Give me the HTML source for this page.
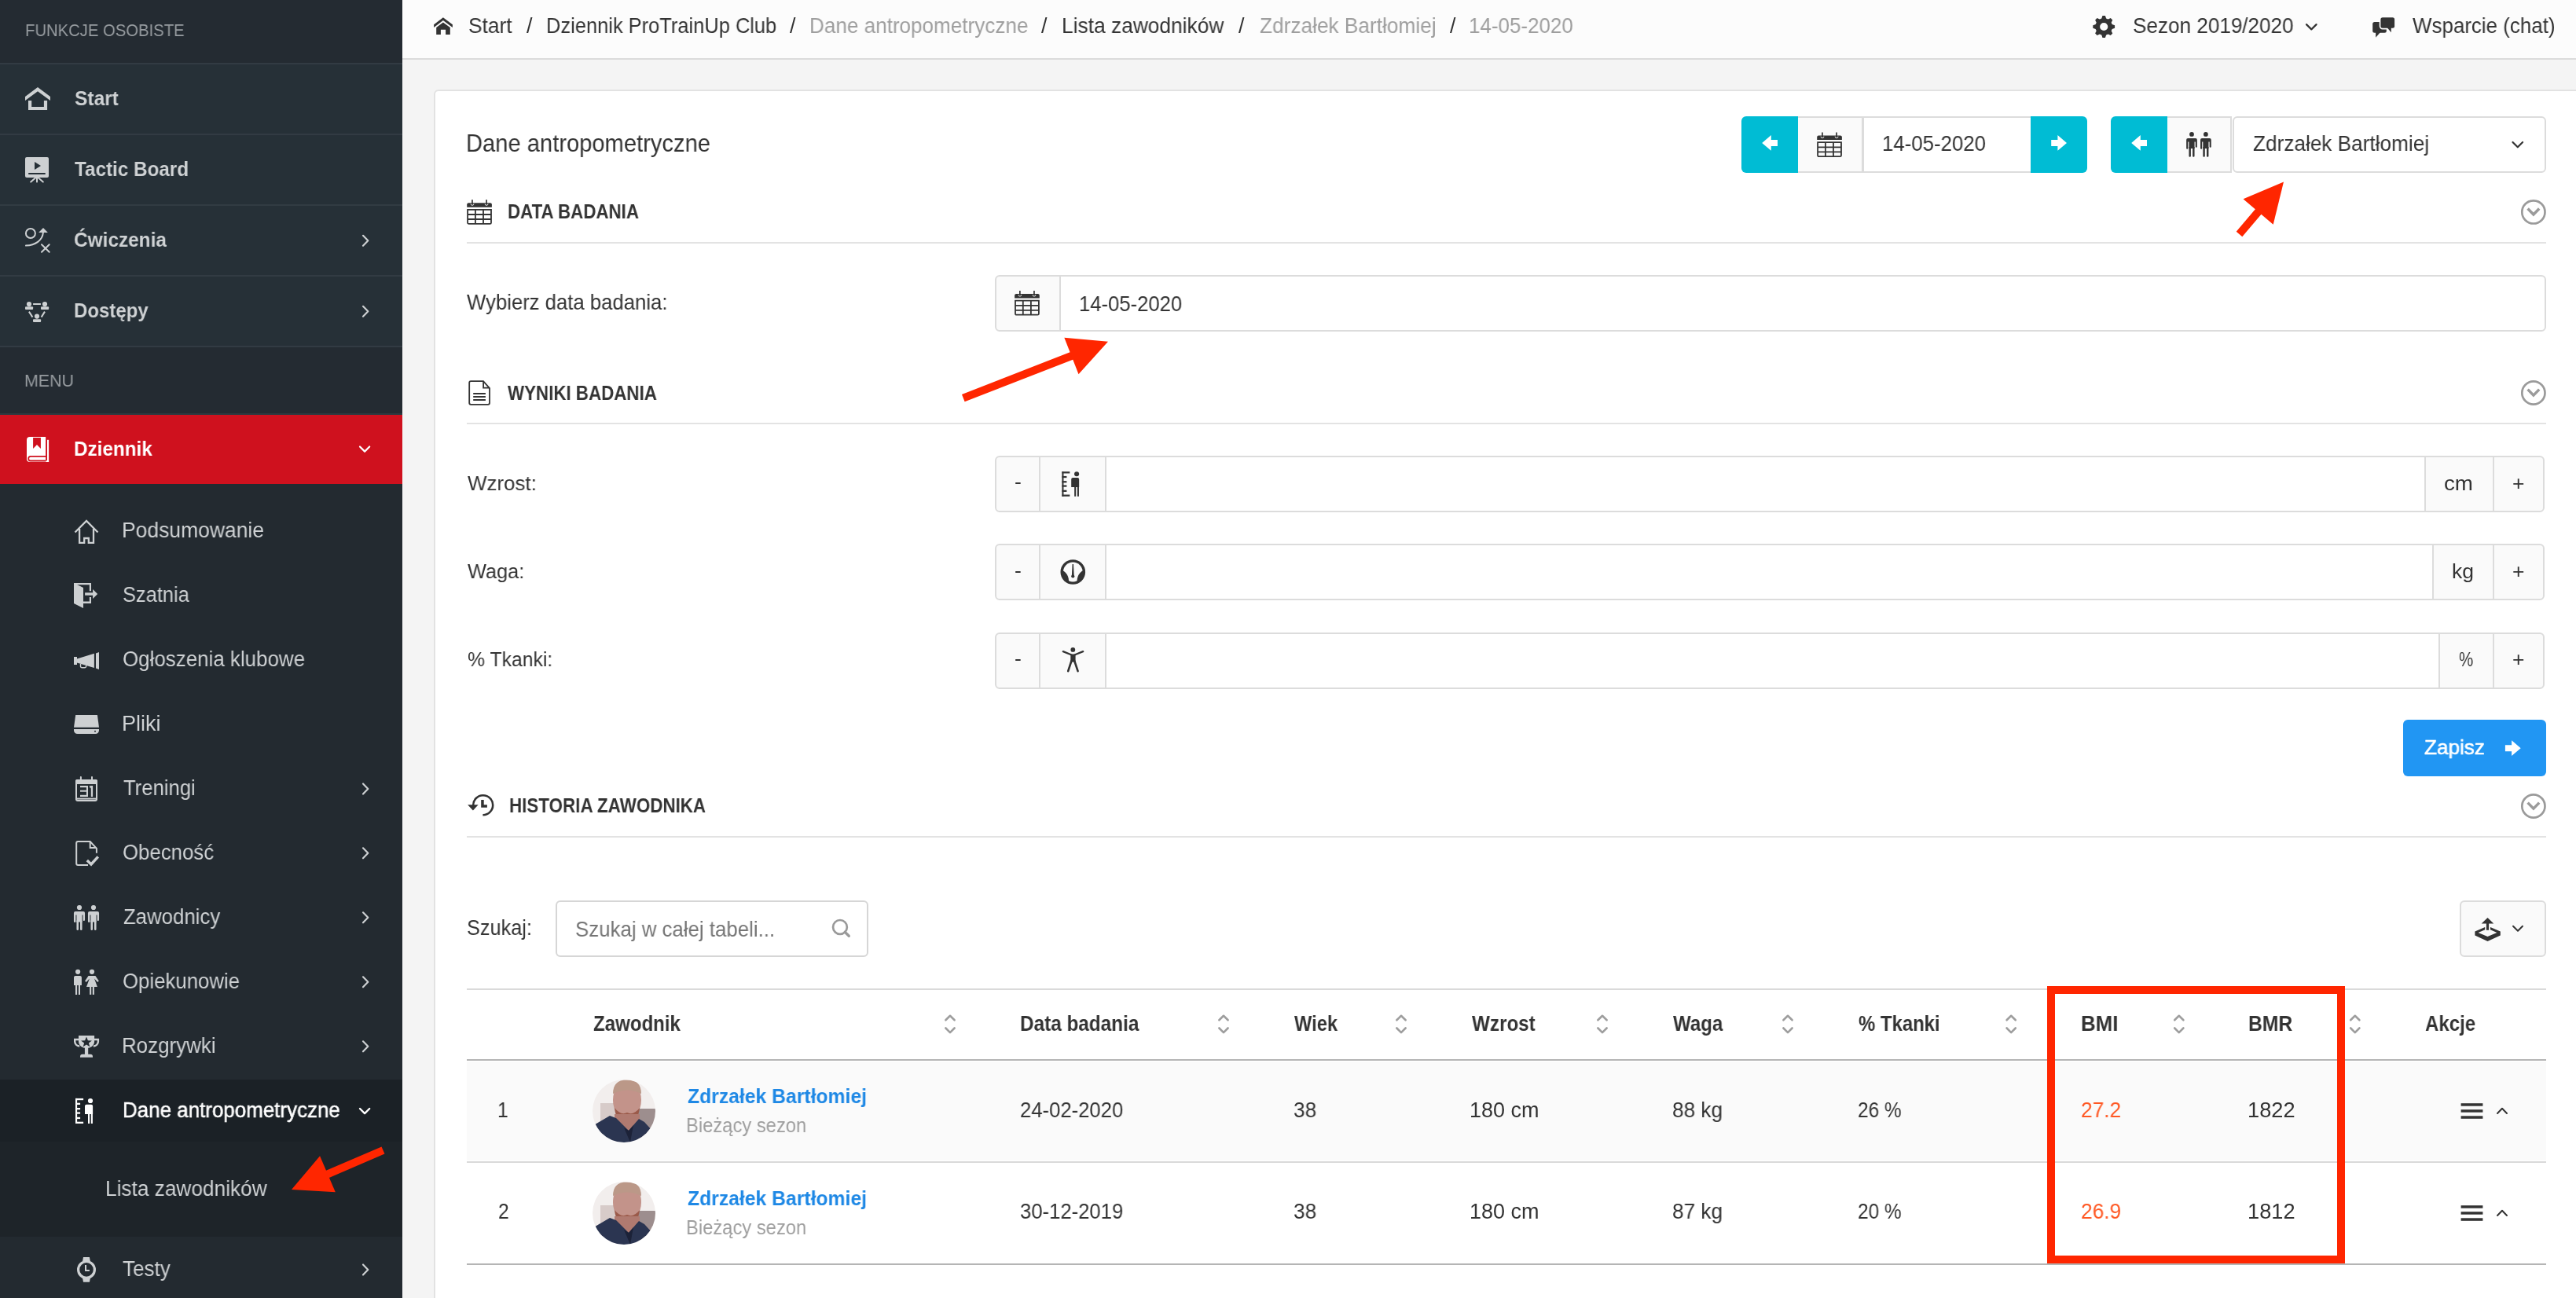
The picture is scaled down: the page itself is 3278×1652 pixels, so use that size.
<!DOCTYPE html>
<html><head><meta charset="utf-8"><style>
html,body{margin:0;padding:0;}
body{width:3278px;height:1652px;overflow:hidden;position:relative;background:#f4f4f4;font-family:"Liberation Sans",sans-serif;}
.a{position:absolute;box-sizing:border-box;}
.t{position:absolute;white-space:nowrap;transform-origin:0 0;will-change:transform;font-family:"Liberation Sans",sans-serif;}
</style></head><body>
<div class="a" style="left:0px;top:0px;width:512px;height:1652px;background:#232a30;"></div>
<div class="a" style="left:0px;top:0px;width:512px;height:80px;background:#242b32;"></div>
<div class="a" style="left:0px;top:80px;width:512px;height:360px;background:#263037;"></div>
<div class="a" style="left:0px;top:80px;width:512px;height:2px;background:#323b43;"></div>
<div class="a" style="left:0px;top:170px;width:512px;height:2px;background:#323b43;"></div>
<div class="a" style="left:0px;top:260px;width:512px;height:2px;background:#323b43;"></div>
<div class="a" style="left:0px;top:350px;width:512px;height:2px;background:#323b43;"></div>
<div class="a" style="left:0px;top:440px;width:512px;height:2px;background:#323b43;"></div>
<div class="a" style="left:0px;top:442px;width:512px;height:86px;background:#242b32;"></div>
<div class="a" style="left:0px;top:526px;width:512px;height:2px;background:#2d3940;"></div>
<div class="a" style="left:0px;top:528px;width:512px;height:88px;background:#cf111e;"></div>
<div class="a" style="left:0px;top:1374px;width:512px;height:79px;background:#1b2126;"></div>
<div class="a" style="left:0px;top:1453px;width:512px;height:121px;background:#1e2429;"></div>
<div class="a" style="left:512px;top:0px;width:2766px;height:74px;background:#fcfcfc;"></div>
<div class="a" style="left:512px;top:74px;width:2766px;height:2px;background:#dcdcdc;"></div>
<div class="a" style="left:552px;top:114px;width:2738px;height:1586px;background:#ffffff;border:2px solid #e2e2e2;border-radius:6px;"></div>
<div class="a" style="left:2216px;top:148px;width:72px;height:72px;background:#00bcd4;border-radius:6px 0 0 6px;"></div>
<div class="a" style="left:2288px;top:148px;width:84px;height:72px;background:#fafafa;border-top:2px solid #dcdcdc;border-bottom:2px solid #dcdcdc;border-right:3px solid #dcdcdc;"></div>
<div class="a" style="left:2372px;top:148px;width:212px;height:72px;background:#ffffff;border-top:2px solid #dcdcdc;border-bottom:2px solid #dcdcdc;"></div>
<div class="a" style="left:2584px;top:148px;width:72px;height:72px;background:#00bcd4;border-radius:0 6px 6px 0;"></div>
<div class="a" style="left:2686px;top:148px;width:72px;height:72px;background:#00bcd4;border-radius:6px 0 0 6px;"></div>
<div class="a" style="left:2758px;top:148px;width:82px;height:72px;background:#fafafa;border-top:2px solid #dcdcdc;border-bottom:2px solid #dcdcdc;border-right:2px solid #dcdcdc;"></div>
<div class="a" style="left:2841px;top:148px;width:399px;height:72px;background:#ffffff;border:2px solid #dcdcdc;border-radius:6px;"></div>
<div class="a" style="left:594px;top:308px;width:2646px;height:2px;background:#e3e3e3;"></div>
<div class="a" style="left:594px;top:538px;width:2646px;height:2px;background:#e3e3e3;"></div>
<div class="a" style="left:594px;top:1064px;width:2646px;height:2px;background:#e3e3e3;"></div>
<div class="a" style="left:1266px;top:350px;width:84px;height:72px;background:#fafafa;border:2px solid #dcdcdc;border-radius:6px 0 0 6px;"></div>
<div class="a" style="left:1348px;top:350px;width:1892px;height:72px;background:#ffffff;border:2px solid #dcdcdc;border-radius:0 6px 6px 0;"></div>
<div class="a" style="left:1266px;top:580px;width:60px;height:72px;background:#fafafa;border:2px solid #dcdcdc;border-radius:6px 0 0 6px;"></div>
<div class="a" style="left:1322px;top:580px;width:86px;height:72px;background:#fafafa;border:2px solid #dcdcdc;"></div>
<div class="a" style="left:1408px;top:580px;width:1677px;height:72px;background:#ffffff;border-top:2px solid #dcdcdc;border-bottom:2px solid #dcdcdc;"></div>
<div class="a" style="left:3085px;top:580px;width:89px;height:72px;background:#fafafa;border:2px solid #dcdcdc;"></div>
<div class="a" style="left:3172px;top:580px;width:66px;height:72px;background:#fafafa;border:2px solid #dcdcdc;border-radius:0 6px 6px 0;"></div>
<div class="a" style="left:1266px;top:692px;width:60px;height:72px;background:#fafafa;border:2px solid #dcdcdc;border-radius:6px 0 0 6px;"></div>
<div class="a" style="left:1322px;top:692px;width:86px;height:72px;background:#fafafa;border:2px solid #dcdcdc;"></div>
<div class="a" style="left:1408px;top:692px;width:1687px;height:72px;background:#ffffff;border-top:2px solid #dcdcdc;border-bottom:2px solid #dcdcdc;"></div>
<div class="a" style="left:3095px;top:692px;width:79px;height:72px;background:#fafafa;border:2px solid #dcdcdc;"></div>
<div class="a" style="left:3172px;top:692px;width:66px;height:72px;background:#fafafa;border:2px solid #dcdcdc;border-radius:0 6px 6px 0;"></div>
<div class="a" style="left:1266px;top:805px;width:60px;height:72px;background:#fafafa;border:2px solid #dcdcdc;border-radius:6px 0 0 6px;"></div>
<div class="a" style="left:1322px;top:805px;width:86px;height:72px;background:#fafafa;border:2px solid #dcdcdc;"></div>
<div class="a" style="left:1408px;top:805px;width:1695px;height:72px;background:#ffffff;border-top:2px solid #dcdcdc;border-bottom:2px solid #dcdcdc;"></div>
<div class="a" style="left:3103px;top:805px;width:71px;height:72px;background:#fafafa;border:2px solid #dcdcdc;"></div>
<div class="a" style="left:3172px;top:805px;width:66px;height:72px;background:#fafafa;border:2px solid #dcdcdc;border-radius:0 6px 6px 0;"></div>
<div class="a" style="left:3058px;top:916px;width:182px;height:72px;background:#2196f3;border-radius:6px;"></div>
<div class="a" style="left:707px;top:1146px;width:398px;height:72px;background:#ffffff;border:2px solid #d6d6d6;border-radius:6px;"></div>
<div class="a" style="left:3130px;top:1146px;width:110px;height:72px;background:#fafafa;border:2px solid #dcdcdc;border-radius:6px;"></div>
<div class="a" style="left:594px;top:1258px;width:2646px;height:2px;background:#dadada;"></div>
<div class="a" style="left:594px;top:1348px;width:2646px;height:2px;background:#b5b5b5;"></div>
<div class="a" style="left:594px;top:1351px;width:2646px;height:126px;background:#fafafa;"></div>
<div class="a" style="left:594px;top:1478px;width:2646px;height:2px;background:#d9d9d9;"></div>
<div class="a" style="left:594px;top:1608px;width:2646px;height:2px;background:#b5b5b5;"></div>
<div class="t" style="left:31.59px;top:28px;font-size:22.32px;line-height:22.32px;color:#989da1;transform:scaleX(0.9079);">FUNKCJE OSOBISTE</div>
<div class="t" style="left:94.50px;top:112px;font-size:26.67px;line-height:26.67px;color:#cfd2d4;font-weight:bold;transform:scaleX(0.9202);">Start</div>
<div class="t" style="left:94.50px;top:202px;font-size:26.67px;line-height:26.67px;color:#cfd2d4;font-weight:bold;transform:scaleX(0.9096);">Tactic Board</div>
<div class="t" style="left:93.68px;top:292px;font-size:26.67px;line-height:26.67px;color:#cfd2d4;font-weight:bold;transform:scaleX(0.9152);">Ćwiczenia</div>
<div class="t" style="left:93.70px;top:382px;font-size:26.67px;line-height:26.67px;color:#cfd2d4;font-weight:bold;transform:scaleX(0.9009);">Dostępy</div>
<div class="t" style="left:31.14px;top:474px;font-size:22.32px;line-height:22.32px;color:#989da1;transform:scaleX(0.9594);">MENU</div>
<div class="t" style="left:93.69px;top:558px;font-size:26.67px;line-height:26.67px;color:#ffffff;font-weight:bold;transform:scaleX(0.9110);">Dziennik</div>
<div class="t" style="left:154.82px;top:662px;font-size:26.81px;line-height:26.81px;color:#cfd2d4;transform:scaleX(0.9883);">Podsumowanie</div>
<div class="t" style="left:155.85px;top:744px;font-size:26.81px;line-height:26.81px;color:#cfd2d4;transform:scaleX(0.9494);">Szatnia</div>
<div class="t" style="left:155.83px;top:826px;font-size:26.81px;line-height:26.81px;color:#cfd2d4;transform:scaleX(0.9675);">Ogłoszenia klubowe</div>
<div class="t" style="left:154.78px;top:908px;font-size:26.81px;line-height:26.81px;color:#cfd2d4;transform:scaleX(1.0091);">Pliki</div>
<div class="t" style="left:156.80px;top:990px;font-size:26.81px;line-height:26.81px;color:#cfd2d4;transform:scaleX(0.9582);">Treningi</div>
<div class="t" style="left:155.84px;top:1072px;font-size:26.81px;line-height:26.81px;color:#cfd2d4;transform:scaleX(0.9627);">Obecność</div>
<div class="t" style="left:156.80px;top:1154px;font-size:26.81px;line-height:26.81px;color:#cfd2d4;transform:scaleX(0.9620);">Zawodnicy</div>
<div class="t" style="left:155.84px;top:1236px;font-size:26.81px;line-height:26.81px;color:#cfd2d4;transform:scaleX(0.9620);">Opiekunowie</div>
<div class="t" style="left:154.87px;top:1318px;font-size:26.81px;line-height:26.81px;color:#cfd2d4;transform:scaleX(0.9666);">Rozgrywki</div>
<div class="t" style="left:155.56px;top:1400px;font-size:26.81px;line-height:26.81px;color:#ffffff;transform:scaleX(0.9679);-webkit-text-stroke:0.5px #ffffff;">Dane antropometryczne</div>
<div class="t" style="left:133.74px;top:1500px;font-size:26.81px;line-height:26.81px;color:#cfd2d4;transform:scaleX(0.9791);">Lista zawodników</div>
<div class="t" style="left:156.40px;top:1602px;font-size:26.81px;line-height:26.81px;color:#cfd2d4;transform:scaleX(0.9708);">Testy</div>
<div class="t" style="left:595.83px;top:20px;font-size:26.96px;line-height:26.96px;color:#333333;transform:scaleX(0.9746);">Start</div>
<div class="t" style="left:669.80px;top:20px;font-size:26.96px;line-height:26.96px;color:#333333;">/</div>
<div class="t" style="left:694.91px;top:20px;font-size:26.96px;line-height:26.96px;color:#333333;transform:scaleX(0.9441);">Dziennik ProTrainUp Club</div>
<div class="t" style="left:1005.00px;top:20px;font-size:26.96px;line-height:26.96px;color:#333333;">/</div>
<div class="t" style="left:1030.26px;top:20px;font-size:26.96px;line-height:26.96px;color:#9e9e9e;transform:scaleX(0.9678);">Dane antropometryczne</div>
<div class="t" style="left:1324.80px;top:20px;font-size:26.96px;line-height:26.96px;color:#333333;">/</div>
<div class="t" style="left:1350.85px;top:20px;font-size:26.96px;line-height:26.96px;color:#333333;transform:scaleX(0.9772);">Lista zawodników</div>
<div class="t" style="left:1575.80px;top:20px;font-size:26.96px;line-height:26.96px;color:#333333;">/</div>
<div class="t" style="left:1602.80px;top:20px;font-size:26.96px;line-height:26.96px;color:#9e9e9e;transform:scaleX(0.9735);">Zdrzałek Bartłomiej</div>
<div class="t" style="left:1845.00px;top:20px;font-size:26.96px;line-height:26.96px;color:#333333;">/</div>
<div class="t" style="left:1869.48px;top:20px;font-size:26.96px;line-height:26.96px;color:#9e9e9e;transform:scaleX(0.9623);">14-05-2020</div>
<div class="t" style="left:2713.53px;top:20px;font-size:26.96px;line-height:26.96px;color:#333333;transform:scaleX(0.9683);">Sezon 2019/2020</div>
<div class="t" style="left:3070.40px;top:20px;font-size:26.96px;line-height:26.96px;color:#333333;transform:scaleX(0.9620);">Wsparcie (chat)</div>
<div class="t" style="left:592.85px;top:167px;font-size:31.59px;line-height:31.59px;color:#333333;transform:scaleX(0.9227);">Dane antropometryczne</div>
<div class="t" style="left:2395.09px;top:170px;font-size:26.96px;line-height:26.96px;color:#333333;transform:scaleX(0.9564);">14-05-2020</div>
<div class="t" style="left:2866.90px;top:170px;font-size:26.96px;line-height:26.96px;color:#333333;transform:scaleX(0.9714);">Zdrzałek Bartłomiej</div>
<div class="t" style="left:645.72px;top:257px;font-size:25.36px;line-height:25.36px;color:#333333;font-weight:bold;transform:scaleX(0.8800);">DATA BADANIA</div>
<div class="t" style="left:594.00px;top:372px;font-size:26.96px;line-height:26.96px;color:#333333;transform:scaleX(0.9532);">Wybierz data badania:</div>
<div class="t" style="left:1373.10px;top:374px;font-size:26.96px;line-height:26.96px;color:#333333;transform:scaleX(0.9505);">14-05-2020</div>
<div class="t" style="left:646.00px;top:488px;font-size:25.36px;line-height:25.36px;color:#333333;font-weight:bold;transform:scaleX(0.8809);">WYNIKI BADANIA</div>
<div class="t" style="left:595.00px;top:602px;font-size:26.52px;line-height:26.52px;color:#333333;transform:scaleX(0.9784);">Wzrost:</div>
<div class="t" style="left:595.00px;top:714px;font-size:26.52px;line-height:26.52px;color:#333333;transform:scaleX(0.9552);">Waga:</div>
<div class="t" style="left:595.00px;top:826px;font-size:26.52px;line-height:26.52px;color:#333333;transform:scaleX(0.9330);">% Tkanki:</div>
<div class="t" style="left:648.32px;top:1013px;font-size:25.36px;line-height:25.36px;color:#333333;font-weight:bold;transform:scaleX(0.8833);">HISTORIA ZAWODNIKA</div>
<div class="t" style="left:593.86px;top:1168px;font-size:26.96px;line-height:26.96px;color:#333333;transform:scaleX(0.9371);">Szukaj:</div>
<div class="t" style="left:732.34px;top:1170px;font-size:26.96px;line-height:26.96px;color:#757575;transform:scaleX(0.9582);">Szukaj w całej tabeli...</div>
<div class="t" style="left:3085.30px;top:938px;font-size:26.52px;line-height:26.52px;color:#ffffff;transform:scaleX(0.9852);-webkit-text-stroke:0.6px #ffffff;">Zapisz</div>
<div class="t" style="left:754.50px;top:1290px;font-size:26.96px;line-height:26.96px;color:#333333;font-weight:bold;transform:scaleX(0.8923);">Zawodnik</div>
<div class="t" style="left:1297.70px;top:1290px;font-size:26.96px;line-height:26.96px;color:#333333;font-weight:bold;transform:scaleX(0.9024);">Data badania</div>
<div class="t" style="left:1646.50px;top:1290px;font-size:26.96px;line-height:26.96px;color:#333333;font-weight:bold;transform:scaleX(0.8778);">Wiek</div>
<div class="t" style="left:1872.50px;top:1290px;font-size:26.96px;line-height:26.96px;color:#333333;font-weight:bold;transform:scaleX(0.8992);">Wzrost</div>
<div class="t" style="left:2128.50px;top:1290px;font-size:26.96px;line-height:26.96px;color:#333333;font-weight:bold;transform:scaleX(0.8916);">Waga</div>
<div class="t" style="left:2364.50px;top:1290px;font-size:26.96px;line-height:26.96px;color:#333333;font-weight:bold;transform:scaleX(0.8868);">% Tkanki</div>
<div class="t" style="left:2647.54px;top:1290px;font-size:26.96px;line-height:26.96px;color:#333333;font-weight:bold;transform:scaleX(0.9591);">BMI</div>
<div class="t" style="left:2861.39px;top:1290px;font-size:26.96px;line-height:26.96px;color:#333333;font-weight:bold;transform:scaleX(0.9146);">BMR</div>
<div class="t" style="left:3086.20px;top:1290px;font-size:26.96px;line-height:26.96px;color:#333333;font-weight:bold;transform:scaleX(0.8911);">Akcje</div>
<div class="t" style="left:633.26px;top:1400px;font-size:26.81px;line-height:26.81px;color:#333333;transform:scaleX(0.9200);">1</div>
<div class="t" style="left:875.00px;top:1382px;font-size:26.67px;line-height:26.67px;color:#1e88e5;font-weight:bold;transform:scaleX(0.9272);">Zdrzałek Bartłomiej</div>
<div class="t" style="left:873.22px;top:1419px;font-size:26.67px;line-height:26.67px;color:#9e9e9e;transform:scaleX(0.8915);">Bieżący sezon</div>
<div class="t" style="left:1298.04px;top:1400px;font-size:26.81px;line-height:26.81px;color:#333333;transform:scaleX(0.9573);">24-02-2020</div>
<div class="t" style="left:1645.52px;top:1400px;font-size:26.81px;line-height:26.81px;color:#333333;transform:scaleX(0.9784);">38</div>
<div class="t" style="left:1870.49px;top:1400px;font-size:26.81px;line-height:26.81px;color:#333333;transform:scaleX(1.0065);">180 cm</div>
<div class="t" style="left:2127.52px;top:1400px;font-size:26.81px;line-height:26.81px;color:#333333;transform:scaleX(0.9757);">88 kg</div>
<div class="t" style="left:2363.59px;top:1400px;font-size:26.81px;line-height:26.81px;color:#333333;transform:scaleX(0.9097);">26 %</div>
<div class="t" style="left:2647.52px;top:1400px;font-size:26.81px;line-height:26.81px;color:#ff5722;transform:scaleX(0.9811);">27.2</div>
<div class="t" style="left:2860.27px;top:1400px;font-size:26.81px;line-height:26.81px;color:#333333;transform:scaleX(1.0157);">1822</div>
<div class="t" style="left:634.18px;top:1529px;font-size:26.81px;line-height:26.81px;color:#333333;transform:scaleX(0.9200);">2</div>
<div class="t" style="left:875.00px;top:1512px;font-size:26.67px;line-height:26.67px;color:#1e88e5;font-weight:bold;transform:scaleX(0.9272);">Zdrzałek Bartłomiej</div>
<div class="t" style="left:873.22px;top:1549px;font-size:26.67px;line-height:26.67px;color:#9e9e9e;transform:scaleX(0.8915);">Bieżący sezon</div>
<div class="t" style="left:1298.04px;top:1529px;font-size:26.81px;line-height:26.81px;color:#333333;transform:scaleX(0.9573);">30-12-2019</div>
<div class="t" style="left:1645.52px;top:1529px;font-size:26.81px;line-height:26.81px;color:#333333;transform:scaleX(0.9784);">38</div>
<div class="t" style="left:1870.49px;top:1529px;font-size:26.81px;line-height:26.81px;color:#333333;transform:scaleX(1.0065);">180 cm</div>
<div class="t" style="left:2127.52px;top:1529px;font-size:26.81px;line-height:26.81px;color:#333333;transform:scaleX(0.9757);">87 kg</div>
<div class="t" style="left:2363.59px;top:1529px;font-size:26.81px;line-height:26.81px;color:#333333;transform:scaleX(0.9097);">20 %</div>
<div class="t" style="left:2647.52px;top:1529px;font-size:26.81px;line-height:26.81px;color:#ff5722;transform:scaleX(0.9811);">26.9</div>
<div class="t" style="left:2860.27px;top:1529px;font-size:26.81px;line-height:26.81px;color:#333333;transform:scaleX(1.0157);">1812</div>
<div class="t" style="left:3109.75px;top:602px;font-size:26.52px;line-height:26.52px;color:#333333;transform:scaleX(1.0464);">cm</div>
<div class="t" style="left:1291.00px;top:600px;font-size:26.52px;line-height:26.52px;color:#333333;">-</div>
<div class="t" style="left:3197.00px;top:602px;font-size:26.52px;line-height:26.52px;color:#333333;">+</div>
<div class="t" style="left:3119.80px;top:714px;font-size:26.52px;line-height:26.52px;color:#333333;transform:scaleX(0.9978);">kg</div>
<div class="t" style="left:1291.00px;top:713px;font-size:26.52px;line-height:26.52px;color:#333333;">-</div>
<div class="t" style="left:3197.00px;top:714px;font-size:26.52px;line-height:26.52px;color:#333333;">+</div>
<div class="t" style="left:3128.60px;top:826px;font-size:26.52px;line-height:26.52px;color:#333333;transform:scaleX(0.7739);">%</div>
<div class="t" style="left:1291.00px;top:825px;font-size:26.52px;line-height:26.52px;color:#333333;">-</div>
<div class="t" style="left:3197.00px;top:826px;font-size:26.52px;line-height:26.52px;color:#333333;">+</div>
<svg class="a" style="left:0;top:0;overflow:visible" width="3278" height="1652"><g fill="#cdd0d2"><polygon points="32,123 48,111 64,123 64,128 48,116.2 32,128"/><path d="M36,128h4.2v8h15.7v-8h4.2v12.1h-24.1z"/></g>
<g fill="#cdd0d2"><rect x="32" y="200" width="30" height="26" rx="2"/></g><g fill="#263037"><polygon points="44,206 44,216 52,211"/><rect x="36.2" y="220" width="21.5" height="2"/></g><g stroke="#cdd0d2" stroke-width="2" stroke-linecap="round"><line x1="47" y1="226" x2="47" y2="231.5"/><line x1="45" y1="226.5" x2="39.2" y2="231.5"/><line x1="49" y1="226.5" x2="54.8" y2="231.5"/></g>
<g fill="none" stroke="#cdd0d2" stroke-width="2" stroke-linecap="round"><circle cx="38.9" cy="297" r="6"/><path d="M33,312.6 C45,312 54,306 54.9,296"/><line x1="53" y1="311.3" x2="62.7" y2="320.8"/><line x1="62.7" y1="311.3" x2="53" y2="320.8"/></g><polygon fill="#cdd0d2" points="55,289.9 49.1,296 60.9,296"/>
<g fill="#cdd0d2"><circle cx="37" cy="387" r="3.1"/><circle cx="57" cy="387" r="3.1"/><circle cx="47" cy="402.6" r="3.1"/><rect x="32" y="390.2" width="10.1" height="3.9" rx="1"/><rect x="52" y="390.2" width="10.1" height="3.9" rx="1"/><rect x="42" y="406.3" width="10.1" height="3.8" rx="1"/><rect x="42.1" y="386" width="9.8" height="2"/></g><g stroke="#cdd0d2" stroke-width="2"><line x1="36.9" y1="396.6" x2="41.4" y2="403.6"/><line x1="57" y1="396.6" x2="52.6" y2="403.6"/></g>
<g fill="#ffffff"><path d="M38,556 h20.1 v32 h-20.1 a4,4 0 0 1 -4,-4 v-24 a4,4 0 0 1 4,-4z"/><rect x="60" y="559.8" width="2.1" height="28.2"/><rect x="38" y="586.2" width="24.1" height="1.8"/></g><path fill="#cf111e" d="M42.1,557.1 h9.8 v13.8 l-4.9,-4.9 l-4.9,4.9z"/><path fill="none" stroke="#cf111e" stroke-width="1.8" d="M58.5,580.9 h-19.5 a2.8,2.8 0 0 0 0,5.6 h19.5"/>
<g fill="none" stroke="#cdd0d2" stroke-width="2.3"><polyline points="95.5,677.5 110,663 124.5,677.5"/><polyline points="101.1,673 101.1,690.9 107.2,690.9 107.2,685 112.8,685 112.8,690.9 119,690.9 119,673"/></g>
<g fill="#cdd0d2"><polygon points="94,742 106,748 106,774 94,768"/><path d="M94,742h22v10.3h-2.2v-8h-19.8z"/><path d="M106,765.6h7.8v-5.6h2.2v8h-10z"/><rect x="108.1" y="754.3" width="10.5" height="3.4"/><polygon points="118.1,750 124.1,756 118.1,762"/></g>
<g fill="#cdd0d2"><rect x="94" y="836" width="4" height="10"/><polygon points="97.9,838.5 119.9,831.8 119.9,850.1 97.9,843.6"/><polygon points="122,831.5 126,829.9 126,852 122,850.6"/></g><path fill="none" stroke="#cdd0d2" stroke-width="1.4" d="M102.5,845 v3 a1.8,1.8 0 0 0 1.8,1.8 h3.5 a1.8,1.8 0 0 0 1.8,-1.8 v-1"/>
<g fill="#cdd0d2"><polygon points="96.2,910 123.9,910 126,925.8 94,925.8"/><path d="M94,928 h32 v1.5 a4.5,4.5 0 0 1 -4.5,4.5 h-23 a4.5,4.5 0 0 1 -4.5,-4.5z"/></g><circle cx="121" cy="930.8" r="1" fill="#232a30"/>
<g fill="none" stroke="#cdd0d2" stroke-width="2"><rect x="97" y="993" width="26" height="26" rx="2"/></g><g fill="#cdd0d2"><rect x="96" y="992" width="28" height="6.1" rx="2"/><rect x="101.9" y="987.9" width="2" height="6.6" rx="1"/><rect x="116" y="987.9" width="2" height="6.6" rx="1"/><rect x="96" y="1015.6" width="28" height="2"/></g><g fill="#cdd0d2"><rect x="102" y="1000" width="10" height="2.2"/><rect x="102" y="1005.7" width="10" height="2"/><rect x="102" y="1011.8" width="10" height="2.2"/><rect x="109.9" y="1000" width="2.1" height="14"/><rect x="115.8" y="1000" width="2.3" height="14"/><polygon points="114,1000 115.8,1000 115.8,1003.5 114,1002"/></g>
<g fill="none" stroke="#cdd0d2" stroke-width="2"><path d="M112,1100.9 h-12.8 a2,2 0 0 1 -2,-2 v-25.8 a2,2 0 0 1 2,-2 h15.5 l8.2,8.8 v5.8"/><path d="M114.7,1071 v8 h8.2"/></g><polyline fill="none" stroke="#cdd0d2" stroke-width="3.4" points="110.8,1095 116,1100 124.8,1090.3"/>
<g fill="#cdd0d2"><circle cx="101" cy="1155" r="3.1"/><path d="M93.95,1162 a2,2 0 0 1 2,-2 h10.1 a2,2 0 0 1 2,2 v8.75 a1.25,1.25 0 0 1 -2.5,0 v-6.25 h-1.0 v9 h-7.099999999999994 v-9 h-1.0 v8.25 a1.25,1.25 0 0 1 -2.5,0z"/><path d="M97.45,1171.5 h2.549999999999997 v11.225000000000001 a1.2749999999999986,1.2749999999999986 0 0 1 -2.549999999999997,0z"/><path d="M102.0,1171.5 h2.549999999999997 v11.225000000000001 a1.2749999999999986,1.2749999999999986 0 0 1 -2.549999999999997,0z"/></g><g fill="#cdd0d2"><circle cx="119" cy="1155" r="3.1"/><path d="M111.95,1162 a2,2 0 0 1 2,-2 h10.1 a2,2 0 0 1 2,2 v8.75 a1.25,1.25 0 0 1 -2.5,0 v-6.25 h-1.0 v9 h-7.099999999999994 v-9 h-1.0 v8.25 a1.25,1.25 0 0 1 -2.5,0z"/><path d="M115.45,1171.5 h2.549999999999997 v11.225000000000001 a1.2749999999999986,1.2749999999999986 0 0 1 -2.549999999999997,0z"/><path d="M120.0,1171.5 h2.549999999999997 v11.225000000000001 a1.2749999999999986,1.2749999999999986 0 0 1 -2.549999999999997,0z"/></g>
<g fill="#cdd0d2"><circle cx="99.1" cy="1236.8" r="3.1"/><path d="M96,1242 h5.9 a2,2 0 0 1 2,2 v10 h-9.9 v-10 a2,2 0 0 1 2,-2z"/><rect x="96" y="1254" width="2.1" height="12"/><rect x="99.9" y="1254" width="2.1" height="12"/><circle cx="117" cy="1236.8" r="3.1"/><polygon points="112.5,1242 121.4,1242 125.8,1248.6 124.2,1250 120,1245.5 123.9,1255.9 110,1255.9 113.9,1245.5 109.7,1250 108.1,1248.6"/><rect x="114.1" y="1255.9" width="2.1" height="10"/><rect x="117.8" y="1255.9" width="2.1" height="10"/></g>
<g fill="#cdd0d2"><path d="M100,1318 h20.1 v8 a10,8 0 0 1 -20.1,0z"/><rect x="107.9" y="1330" width="4.3" height="12.5"/><path d="M102,1345.8 v-1 a3,3 0 0 1 3,-3 h10 a3,3 0 0 1 3,3 v1z"/></g><path fill="none" stroke="#cdd0d2" stroke-width="2.4" d="M100.5,1323 h-5.3 v2.5 a6,6 0 0 0 6,6 M119.6,1323 h5.3 v2.5 a6,6 0 0 1 -6,6"/><polygon fill="#232a30" points="110,1319.5 111.9,1324.3 116.9,1324.4 112.9,1327.5 114.3,1332.3 110,1329.5 105.7,1332.3 107.1,1327.5 103.1,1324.4 108.1,1324.3"/>
<g fill="#ffffff" transform="translate(96,1397.9) scale(1.0)"><rect x="0" y="0" width="2.1" height="32.1"/><rect x="0" y="0" width="10.1" height="2.3"/><rect x="0" y="29.8" width="10.1" height="2.3"/><rect x="0" y="5.8" width="6.1" height="2.3"/><rect x="0" y="12.1" width="6.1" height="2.3"/><rect x="0" y="17.5" width="6.1" height="2.3"/><rect x="0" y="23.9" width="6.1" height="2.3"/><circle cx="19" cy="3.1" r="3.1"/><path d="M16,7.9 h4.1 a2,2 0 0 1 2,2 v10.1 h-10.1 v-10.1 a2,2 0 0 1 2,-2z"/><rect x="16" y="20" width="2.1" height="12.1"/><rect x="19.8" y="20" width="2.1" height="12.1"/></g>
<g fill="#cdd0d2"><polygon points="106,1600 113.9,1600 114.9,1605.4 105,1605.4"/><polygon points="105,1626.4 114.9,1626.4 113.9,1631.8 106,1631.8"/></g><circle cx="110" cy="1615.9" r="10.4" fill="none" stroke="#cdd0d2" stroke-width="3.2"/><path fill="none" stroke="#cdd0d2" stroke-width="2" d="M109,1610 v7 h4.9"/>
<polyline fill="none" stroke="#cdd0d2" stroke-width="2.2" stroke-linecap="round" stroke-linejoin="round" points="462,299.8 468.3,306.3 462,312.8"/>
<polyline fill="none" stroke="#cdd0d2" stroke-width="2.2" stroke-linecap="round" stroke-linejoin="round" points="462,389.8 468.3,396.3 462,402.8"/>
<polyline fill="none" stroke="#cdd0d2" stroke-width="2.2" stroke-linecap="round" stroke-linejoin="round" points="462,997.5 468.3,1004 462,1010.5"/>
<polyline fill="none" stroke="#cdd0d2" stroke-width="2.2" stroke-linecap="round" stroke-linejoin="round" points="462,1079.3 468.3,1085.8 462,1092.3"/>
<polyline fill="none" stroke="#cdd0d2" stroke-width="2.2" stroke-linecap="round" stroke-linejoin="round" points="462,1161.3 468.3,1167.8 462,1174.3"/>
<polyline fill="none" stroke="#cdd0d2" stroke-width="2.2" stroke-linecap="round" stroke-linejoin="round" points="462,1243.3 468.3,1249.8 462,1256.3"/>
<polyline fill="none" stroke="#cdd0d2" stroke-width="2.2" stroke-linecap="round" stroke-linejoin="round" points="462,1325.3 468.3,1331.8 462,1338.3"/>
<polyline fill="none" stroke="#cdd0d2" stroke-width="2.2" stroke-linecap="round" stroke-linejoin="round" points="462,1609.5 468.3,1616 462,1622.5"/>
<polyline fill="none" stroke="#ffffff" stroke-width="2.2" stroke-linecap="round" stroke-linejoin="round" points="458,568.5 464.1,574.6 470.2,568.5"/>
<polyline fill="none" stroke="#ffffff" stroke-width="2.4" stroke-linecap="round" stroke-linejoin="round" points="458,1411 464.1,1417.1 470.2,1411"/>
<g fill="#333333"><polygon points="552.1,31.2 563.9,22.3 575.9,31.2 575.9,35 563.9,26 552.1,35"/><path d="M555.2,35.1 L563.9,28.6 L572.8,35.1 V43.9 H567.1 V37.7 H560.9 V43.9 H555.2z"/></g>
<path fill="#333333" fill-rule="evenodd" d="M2674.29,23.49 L2675.45,20.11 L2678.95,20.11 L2680.11,23.49 L2682.57,24.52 L2685.79,22.94 L2688.26,25.41 L2686.68,28.63 L2687.71,31.09 L2691.09,32.25 L2691.09,35.75 L2687.71,36.91 L2686.68,39.37 L2688.26,42.59 L2685.79,45.06 L2682.57,43.48 L2680.11,44.51 L2678.95,47.89 L2675.45,47.89 L2674.29,44.51 L2671.83,43.48 L2668.61,45.06 L2666.14,42.59 L2667.72,39.37 L2666.69,36.91 L2663.31,35.75 L2663.31,32.25 L2666.69,31.09 L2667.72,28.63 L2666.14,25.41 L2668.61,22.94 L2671.83,24.52Z M2682.2999999999997,34 a5.1,5.1 0 1 0 -10.2,0 a5.1,5.1 0 1 0 10.2,0z"/>
<polyline fill="none" stroke="#333333" stroke-width="2.2" stroke-linecap="round" stroke-linejoin="round" points="2935,31.1 2941.3,37.4 2947.6,31.1"/>
<g fill="#333333"><rect x="3019.2" y="28.1" width="17.6" height="13.6" rx="2.5"/><polygon points="3023.1,41 3023.1,47.7 3029.1,41"/></g><g fill="#333333" stroke="#fcfcfc" stroke-width="3.4" paint-order="stroke"><rect x="3029.4" y="22.2" width="17.7" height="13.5" rx="2.5"/></g><polygon fill="#333333" points="3037.6,35 3042.8,35 3042.8,41.2"/>
<g transform="translate(594.2,254.2)"><path fill="#333333" d="M2,4 h27.7 a2,2 0 0 1 2,2 v3.5 h-31.7 v-3.5 a2,2 0 0 1 2,-2z"/><rect x="5.9" y="0" width="1.7" height="6" fill="#333333"/><rect x="24" y="0" width="1.7" height="6" fill="#333333"/><path fill="none" stroke="#ffffff" stroke-width="0.9" d="M4.9,5.2 a1.9,1.9 0 0 0 3.8,0 M23,5.2 a1.9,1.9 0 0 0 3.8,0"/><path fill="none" stroke="#333333" stroke-width="1.8" d="M0.9,12.7 h29.9 v16.5 a1.5,1.5 0 0 1 -1.5,1.5 h-26.9 a1.5,1.5 0 0 1 -1.5,-1.5z M10.7,12.7 v18 M20.8,12.7 v18 M0.9,18.8 h29.9 M0.9,24.8 h29.9"/></g>
<g transform="translate(1291.1,370)"><path fill="#333333" d="M2,4 h27.7 a2,2 0 0 1 2,2 v3.5 h-31.7 v-3.5 a2,2 0 0 1 2,-2z"/><rect x="5.9" y="0" width="1.7" height="6" fill="#333333"/><rect x="24" y="0" width="1.7" height="6" fill="#333333"/><path fill="none" stroke="#fafafa" stroke-width="0.9" d="M4.9,5.2 a1.9,1.9 0 0 0 3.8,0 M23,5.2 a1.9,1.9 0 0 0 3.8,0"/><path fill="none" stroke="#333333" stroke-width="1.8" d="M0.9,12.7 h29.9 v16.5 a1.5,1.5 0 0 1 -1.5,1.5 h-26.9 a1.5,1.5 0 0 1 -1.5,-1.5z M10.7,12.7 v18 M20.8,12.7 v18 M0.9,18.8 h29.9 M0.9,24.8 h29.9"/></g>
<g transform="translate(2312.2,168.5)"><path fill="#333333" d="M2,4 h27.7 a2,2 0 0 1 2,2 v3.5 h-31.7 v-3.5 a2,2 0 0 1 2,-2z"/><rect x="5.9" y="0" width="1.7" height="6" fill="#333333"/><rect x="24" y="0" width="1.7" height="6" fill="#333333"/><path fill="none" stroke="#fafafa" stroke-width="0.9" d="M4.9,5.2 a1.9,1.9 0 0 0 3.8,0 M23,5.2 a1.9,1.9 0 0 0 3.8,0"/><path fill="none" stroke="#333333" stroke-width="1.8" d="M0.9,12.7 h29.9 v16.5 a1.5,1.5 0 0 1 -1.5,1.5 h-26.9 a1.5,1.5 0 0 1 -1.5,-1.5z M10.7,12.7 v18 M20.8,12.7 v18 M0.9,18.8 h29.9 M0.9,24.8 h29.9"/></g>
<g fill="none" stroke="#333333" stroke-width="1.8"><path d="M615,485.1 h-15.8 a2,2 0 0 0 -2,2 v25.7 a2,2 0 0 0 2,2 h21.8 a2,2 0 0 0 2,-2 v-18.6z"/><path d="M615.1,485.1 v8.5 h7.9"/><path d="M602.2,501 h15.7 M602.2,505 h15.7 M602.2,509 h15.7"/></g>
<circle cx="3223.9" cy="269.9" r="14.6" fill="none" stroke="#9b9b9b" stroke-width="2.7"/><polyline fill="none" stroke="#9b9b9b" stroke-width="3.5" points="3216.6,265.5 3223.9,273.0 3231.2,265.5"/>
<circle cx="3223.9" cy="500" r="14.6" fill="none" stroke="#9b9b9b" stroke-width="2.7"/><polyline fill="none" stroke="#9b9b9b" stroke-width="3.5" points="3216.6,495.6 3223.9,503.1 3231.2,495.6"/>
<circle cx="3223.9" cy="1026" r="14.6" fill="none" stroke="#9b9b9b" stroke-width="2.7"/><polyline fill="none" stroke="#9b9b9b" stroke-width="3.5" points="3216.6,1021.6 3223.9,1029.1 3231.2,1021.6"/>
<path fill="#ffffff" d="M2242.2,181.9 L2253.7999999999997,172.0 V178.0 H2262.0 V185.9 H2253.7999999999997 V191.70000000000002z"/>
<path fill="#ffffff" d="M2630,181.9 L2618.4,172.0 V178.0 H2610.2 V185.9 H2618.4 V191.70000000000002z"/>
<path fill="#ffffff" d="M2712.2,181.9 L2723.7999999999997,172.0 V178.0 H2732.0 V185.9 H2723.7999999999997 V191.70000000000002z"/>
<path fill="#ffffff" d="M3207.7,952.2 L3196.1,942.3000000000001 V948.3000000000001 H3187.8999999999996 V956.2 H3196.1 V962.0z"/>
<g fill="#333333"><circle cx="2789" cy="170.9" r="2.9"/><path d="M2782.15,178.1 a2,2 0 0 1 2,-2 h9.7 a2,2 0 0 1 2,2 v8.549999999999994 a1.05,1.05 0 0 1 -2.1,0 v-6.049999999999994 h-1.199999999999818 v8.400000000000006 h-7.100000000000364 v-8.400000000000006 h-1.199999999999727 v8.049999999999994 a1.05,1.05 0 0 1 -2.1,0z"/><path d="M2785.45,187.0 h2.450000000000182 v11.474999999999898 a1.225000000000091,1.225000000000091 0 0 1 -2.450000000000182,0z"/><path d="M2790.1,187.0 h2.450000000000182 v11.474999999999898 a1.225000000000091,1.225000000000091 0 0 1 -2.450000000000182,0z"/></g><g fill="#333333"><circle cx="2806.9" cy="170.9" r="2.9"/><path d="M2800.05,178.1 a2,2 0 0 1 2,-2 h9.7 a2,2 0 0 1 2,2 v8.549999999999994 a1.05,1.05 0 0 1 -2.1,0 v-6.049999999999994 h-1.199999999999818 v8.400000000000006 h-7.100000000000364 v-8.400000000000006 h-1.199999999999727 v8.049999999999994 a1.05,1.05 0 0 1 -2.1,0z"/><path d="M2803.35,187.0 h2.450000000000182 v11.474999999999898 a1.225000000000091,1.225000000000091 0 0 1 -2.450000000000182,0z"/><path d="M2808.0,187.0 h2.450000000000182 v11.474999999999898 a1.225000000000091,1.225000000000091 0 0 1 -2.450000000000182,0z"/></g>
<polyline fill="none" stroke="#333333" stroke-width="2.2" stroke-linecap="round" stroke-linejoin="round" points="3197.5,181 3203.8,187.3 3210.1,181"/>
<g fill="#333333" transform="translate(1351.4,600.2) scale(0.9844236760124611)"><rect x="0" y="0" width="2.1" height="32.1"/><rect x="0" y="0" width="10.1" height="2.3"/><rect x="0" y="29.8" width="10.1" height="2.3"/><rect x="0" y="5.8" width="6.1" height="2.3"/><rect x="0" y="12.1" width="6.1" height="2.3"/><rect x="0" y="17.5" width="6.1" height="2.3"/><rect x="0" y="23.9" width="6.1" height="2.3"/><circle cx="19" cy="3.1" r="3.1"/><path d="M16,7.9 h4.1 a2,2 0 0 1 2,2 v10.1 h-10.1 v-10.1 a2,2 0 0 1 2,-2z"/><rect x="16" y="20" width="2.1" height="12.1"/><rect x="19.8" y="20" width="2.1" height="12.1"/></g>
<g><circle cx="1365.3" cy="728" r="15.8" fill="#333333"/><circle cx="1365.3" cy="728" r="12.4" fill="#fafafa"/><clipPath id="gc"><circle cx="1365.3" cy="728" r="13.2"/></clipPath><g clip-path="url(#gc)" fill="#333333"><circle cx="1345" cy="739" r="15"/><circle cx="1385.6" cy="739" r="15"/></g><polygon fill="#333333" points="1364.6,718.1 1366,718.1 1366.8,734 1363.8,734"/><circle cx="1365.3" cy="733.5" r="2.1" fill="#333333"/></g>
<g fill="#333333"><circle cx="1365.3" cy="826.9" r="2.9"/><path d="M1362.3,832.5 h6.3 v10 h-6.3z"/></g><g stroke="#333333" stroke-width="2.3" stroke-linecap="round"><line x1="1352.8" y1="829.1" x2="1363" y2="833.2"/><line x1="1378.2" y1="829.1" x2="1368" y2="833.2"/><line x1="1363.5" y1="841" x2="1359.2" y2="854.2" stroke-width="2.6"/><line x1="1367.2" y1="841" x2="1371.6" y2="854.2" stroke-width="2.6"/></g>
<path fill="none" stroke="#333333" stroke-width="2.6" d="M602.2,1025 A12.5,12.5 0 1 1 614.4,1037.2"/><polygon fill="#333333" points="595.1,1024.3 608.6,1024.3 601.9,1031.5"/><path fill="#333333" d="M612.2,1018 h3.5 v6.3 h4.2 v3.5 h-7.7z"/>
<circle cx="1068.95" cy="1179.9" r="8.9" fill="none" stroke="#9a9a9a" stroke-width="2.7"/><line x1="1075.2" y1="1186.3" x2="1080.3" y2="1191.3" stroke="#9a9a9a" stroke-width="3.3" stroke-linecap="round"/>
<g fill="#333333"><polygon points="3165.5,1168 3173.3,1175.5 3157.7,1175.5"/><rect x="3163.9" y="1175" width="3.2" height="8.8"/><path d="M3162.2,1180.1 L3149.4,1185.4 V1190.4 L3165.5,1197.9 L3181.8,1190.4 V1185.4 L3169,1180.1 V1183.3 L3177.4,1186.9 L3165.5,1191.9 L3153.6,1186.9 L3162.2,1183.3z"/></g><polyline fill="none" stroke="#333333" stroke-width="2" stroke-linecap="round" stroke-linejoin="round" points="3198,1178.8 3204,1184.8 3210,1178.8"/>
<g fill="none" stroke="#9e9e9e" stroke-width="2.6" stroke-linecap="round" stroke-linejoin="round"><polyline points="1203.4,1298.3 1209,1292.8 1214.6,1298.3"/><polyline points="1203.4,1308.5 1209,1314.1 1214.6,1308.5"/></g>
<g fill="none" stroke="#9e9e9e" stroke-width="2.6" stroke-linecap="round" stroke-linejoin="round"><polyline points="1551.4,1298.3 1557,1292.8 1562.6,1298.3"/><polyline points="1551.4,1308.5 1557,1314.1 1562.6,1308.5"/></g>
<g fill="none" stroke="#9e9e9e" stroke-width="2.6" stroke-linecap="round" stroke-linejoin="round"><polyline points="1777.4,1298.3 1783,1292.8 1788.6,1298.3"/><polyline points="1777.4,1308.5 1783,1314.1 1788.6,1308.5"/></g>
<g fill="none" stroke="#9e9e9e" stroke-width="2.6" stroke-linecap="round" stroke-linejoin="round"><polyline points="2033.4,1298.3 2039,1292.8 2044.6,1298.3"/><polyline points="2033.4,1308.5 2039,1314.1 2044.6,1308.5"/></g>
<g fill="none" stroke="#9e9e9e" stroke-width="2.6" stroke-linecap="round" stroke-linejoin="round"><polyline points="2269.4,1298.3 2275,1292.8 2280.6,1298.3"/><polyline points="2269.4,1308.5 2275,1314.1 2280.6,1308.5"/></g>
<g fill="none" stroke="#9e9e9e" stroke-width="2.6" stroke-linecap="round" stroke-linejoin="round"><polyline points="2553.6,1298.3 2559.2,1292.8 2564.7999999999997,1298.3"/><polyline points="2553.6,1308.5 2559.2,1314.1 2564.7999999999997,1308.5"/></g>
<g fill="none" stroke="#9e9e9e" stroke-width="2.6" stroke-linecap="round" stroke-linejoin="round"><polyline points="2767.2000000000003,1298.3 2772.8,1292.8 2778.4,1298.3"/><polyline points="2767.2000000000003,1308.5 2772.8,1314.1 2778.4,1308.5"/></g>
<g fill="none" stroke="#9e9e9e" stroke-width="2.6" stroke-linecap="round" stroke-linejoin="round"><polyline points="2991.2000000000003,1298.3 2996.8,1292.8 3002.4,1298.3"/><polyline points="2991.2000000000003,1308.5 2996.8,1314.1 3002.4,1308.5"/></g>
<g fill="#333333"><rect x="3131.6" y="1404.2" width="27.8" height="3.5"/><rect x="3131.6" y="1412.2" width="27.8" height="3.5"/><rect x="3131.6" y="1420.3" width="27.8" height="3.5"/></g><polyline fill="none" stroke="#333333" stroke-width="2" stroke-linecap="round" stroke-linejoin="round" points="3178,1417 3184,1410.7 3190,1417"/>
<g fill="#333333"><rect x="3131.6" y="1534.2" width="27.8" height="3.5"/><rect x="3131.6" y="1542.2" width="27.8" height="3.5"/><rect x="3131.6" y="1550.3" width="27.8" height="3.5"/></g><polyline fill="none" stroke="#333333" stroke-width="2" stroke-linecap="round" stroke-linejoin="round" points="3178,1547 3184,1540.7 3190,1547"/>
<clipPath id="av1414"><circle cx="794" cy="1414" r="40"/></clipPath><g clip-path="url(#av1414)"><rect x="754" y="1374" width="80" height="80" fill="#f2eeed"/><rect x="764" y="1404" width="22" height="40" fill="#d7cbc9"/><rect x="811" y="1411" width="24" height="40" fill="#9d8e8e"/><ellipse cx="798" cy="1400" rx="18" ry="25" fill="#c3938a"/><path d="M780,1392 Q780,1374 798,1374.5 Q816,1374 816,1392 Q798,1383 780,1392z" fill="#bb9888"/><path d="M782,1410 Q784,1430 799,1430 Q812,1428 814,1410 Q806,1420 798,1416 Q790,1420 782,1410z" fill="#9b5a4a"/><path d="M782,1418 L814,1418 L814,1426 L800,1440 L782,1422z" fill="#b07a70"/><path d="M754,1433 L776,1420 L784,1423 L800,1439 L813,1424 L820,1428 L838,1448 L838,1460 L750,1460z" fill="#2b3551"/><path d="M794,1435 L800,1439 L806,1432 L802,1454 z" fill="#1c2238"/></g>
<clipPath id="av1544"><circle cx="794" cy="1544" r="40"/></clipPath><g clip-path="url(#av1544)"><rect x="754" y="1504" width="80" height="80" fill="#f2eeed"/><rect x="764" y="1534" width="22" height="40" fill="#d7cbc9"/><rect x="811" y="1541" width="24" height="40" fill="#9d8e8e"/><ellipse cx="798" cy="1530" rx="18" ry="25" fill="#c3938a"/><path d="M780,1522 Q780,1504 798,1504.5 Q816,1504 816,1522 Q798,1513 780,1522z" fill="#bb9888"/><path d="M782,1540 Q784,1560 799,1560 Q812,1558 814,1540 Q806,1550 798,1546 Q790,1550 782,1540z" fill="#9b5a4a"/><path d="M782,1548 L814,1548 L814,1556 L800,1570 L782,1552z" fill="#b07a70"/><path d="M754,1563 L776,1550 L784,1553 L800,1569 L813,1554 L820,1558 L838,1578 L838,1590 L750,1590z" fill="#2b3551"/><path d="M794,1565 L800,1569 L806,1562 L802,1584 z" fill="#1c2238"/></g>
<rect x="2610" y="1260" width="369" height="343" fill="none" stroke="#ff2600" stroke-width="10"/>
<line x1="1225.8" y1="506.6" x2="1365.2774589073033" y2="452.23256487760926" stroke="#ff2600" stroke-width="10"/><polygon fill="#ff2600" points="1410,434.8 1372.4934805688624,476.2519118999558 1354.3345588213526,429.66593159506346"/>
<line x1="2849.5" y1="298" x2="2874.9479875348484" y2="268.0029031890105" stroke="#ff2600" stroke-width="10"/><polygon fill="#ff2600" points="2906,231.4 2892.7181657597434,285.70094731415236 2854.590141604524,253.35510099628618"/>
<line x1="487.5" y1="1464" x2="415.1091636430119" y2="1495.069028479394" stroke="#ff2600" stroke-width="10"/><polygon fill="#ff2600" points="371,1514 407.0871644611551,1471.3067152686335 426.80692646178636,1517.2537607301042"/></svg>
</body></html>
